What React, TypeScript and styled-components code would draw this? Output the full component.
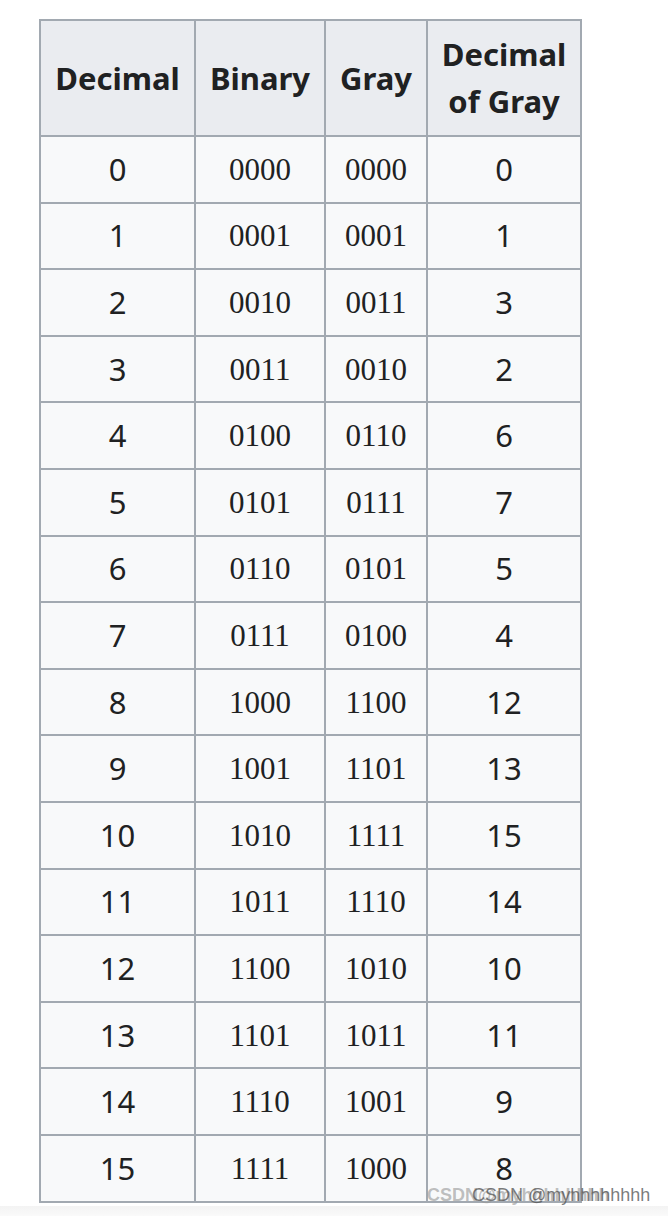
import styled, { createGlobalStyle } from 'styled-components';

const GlobalStyle = createGlobalStyle`
  html, body {
    margin: 0;
    padding: 0;
    background: #ffffff;
  }
  body {
    font-family: "Noto Sans", "Open Sans", sans-serif;
    color: #202122;
  }
`;

interface Row {
  dec: number;
  bin: string;
  gray: string;
  grayDec: number;
}

const rows: Row[] = Array.from({ length: 16 }, (_, i) => {
  const g = i ^ (i >> 1);
  return {
    dec: i,
    bin: i.toString(2).padStart(4, '0'),
    gray: g.toString(2).padStart(4, '0'),
    grayDec: g,
  };
});

const columnWidths = [155, 130, 102, 154];

const App = () => {
  return (
    <>
      <GlobalStyle />
      <Page>
        <TableWrap>
          <Table>
            <colgroup>
              {columnWidths.map((w, i) => (
                <col key={i} style={{ width: w }} />
              ))}
            </colgroup>
            <thead>
              <tr>
                <HeadCell>Decimal</HeadCell>
                <HeadCell>Binary</HeadCell>
                <HeadCell>Gray</HeadCell>
                <HeadCell>
                  Decimal
                  <br />
                  of Gray
                </HeadCell>
              </tr>
            </thead>
            <tbody>
              {rows.map((r) => (
                <tr key={r.dec}>
                  <Cell>{r.dec}</Cell>
                  <Cell serif>{r.bin}</Cell>
                  <Cell serif>{r.gray}</Cell>
                  <Cell>{r.grayDec}</Cell>
                </tr>
              ))}
            </tbody>
          </Table>
          <Watermark faint>CSDN@myhhhhhhhh</Watermark>
          <Watermark>CSDN @myhhhhhhhh</Watermark>
        </TableWrap>
        <BottomShade />
      </Page>
    </>
  );
};

const Page = styled.div`
  width: 668px;
  height: 1216px;
  display: flex;
  flex-direction: column;
  padding: 19px 0 0 39px;
  box-sizing: border-box;
`;

const TableWrap = styled.div`
  position: relative;
  width: 544px;
`;

const Table = styled.table`
  border-collapse: collapse;
  table-layout: fixed;
  width: 543px;
  background: #f8f9fa;
  border: 2px solid #a2a9b1;
`;

const HeadCell = styled.th`
  height: 114px;
  padding: 0 8px;
  background: #eaecf0;
  border: 2px solid #a2a9b1;
  font-family: "Noto Sans", "Open Sans", sans-serif;
  font-weight: 700;
  font-size: 31px;
  line-height: 47px;
  text-align: center;
  vertical-align: middle;
  color: #202122;
`;

const Cell = styled.td<{ serif?: boolean }>`
  height: 64.6px;
  padding: 0 8px;
  border: 2px solid #a2a9b1;
  text-align: center;
  vertical-align: middle;
  color: #202122;
  font-family: ${({ serif }) =>
    serif ? '"Liberation Serif", "DejaVu Serif", serif' : '"Noto Sans", "Open Sans", sans-serif'};
  font-size: 31px;
  line-height: 1;
`;

const Watermark = styled.span<{ faint?: boolean }>`
  position: absolute;
  bottom: -3px;
  left: ${({ faint }) => (faint ? '388px' : '433px')};
  font-family: "Liberation Sans", Arial, sans-serif;
  font-size: 18px;
  font-weight: ${({ faint }) => (faint ? 700 : 400)};
  white-space: nowrap;
  color: ${({ faint }) => (faint ? 'rgba(150, 150, 150, 0.6)' : 'rgba(80, 80, 80, 0.75)')};
  pointer-events: none;
`;

const BottomShade = styled.div`
  margin-top: 3px;
  margin-left: -39px;
  height: 10px;
  background: linear-gradient(#f3f3f3, #fafafa);
`;

export default App;
